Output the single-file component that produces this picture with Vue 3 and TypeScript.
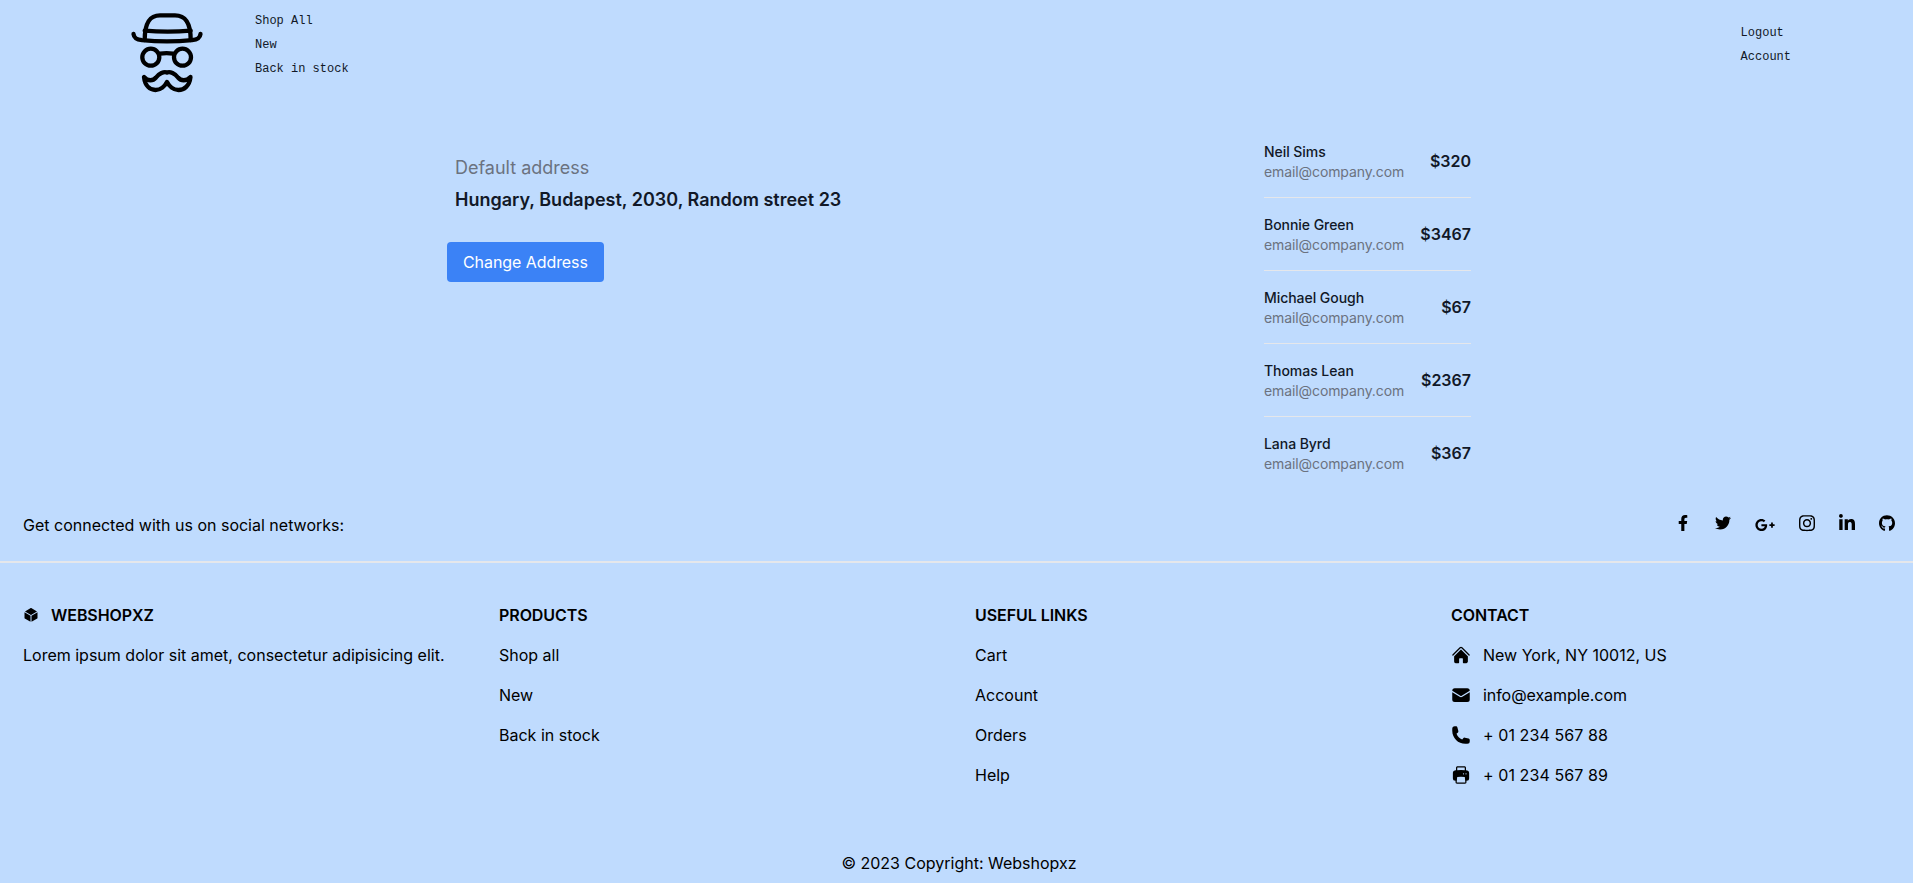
<template>
  <div class="page">
    <header class="topbar">
      <svg class="logo" viewBox="0 0 76 90" fill="none" stroke="#000" stroke-width="4.3" stroke-linecap="round" stroke-linejoin="round">
        <path d="M14.7 30 C14.7 12 20 5.4 30 5.4 L45 5.4 C55 5.4 60.7 12 60.7 30" />
        <path d="M14.7 20.6 Q37.7 22.6 60.7 20.6" />
        <path d="M3.5 24 C4 28.5 7 29.6 12 30.2 Q37 32.6 62 30.2 C67 29.6 70 28.5 70.5 24" />
        <circle cx="20.8" cy="47.2" r="8.5" />
        <circle cx="52.5" cy="47.2" r="8.5" />
        <path d="M30 43.6 Q36.6 42.8 43 43.6" />
        <path d="M14 67 C15 76 20 80 25.5 80 C30.5 80 35 76 37 72 C39 76 43.5 80 48.5 80 C54 80 59.5 76 60.5 67 C56 71.5 51 71 48 67.5 C45 63.5 40 61 37 62.5 C34 61 29 63.5 26 67.5 C23 71 18 71.5 14 67 Z" />
      </svg>
      <nav class="nav-main">
        <a v-for="item in mainNav" :key="item">{{ item }}</a>
      </nav>
      <nav class="nav-user">
        <a v-for="item in userNav" :key="item">{{ item }}</a>
      </nav>
    </header>

    <main class="content">
      <section class="address">
        <p class="address-label">Default address</p>
        <p class="address-value">Hungary, Budapest, 2030, Random street 23</p>
        <button class="change-btn">Change Address</button>
      </section>
      <ul class="customers">
        <li v-for="c in customers" :key="c.name" class="customer">
          <div>
            <p class="customer-name">{{ c.name }}</p>
            <p class="customer-email">email@company.com</p>
          </div>
          <span class="customer-price">{{ c.price }}</span>
        </li>
      </ul>
    </main>

    <footer class="footer">
      <div class="social">
        <span>Get connected with us on social networks:</span>
        <div class="social-icons">
          <a v-for="s in socials" :key="s.name" class="social-icon" :style="{ width: s.box + 'px', marginTop: s.top + 'px' }">
            <svg :viewBox="s.viewBox" :style="{ width: s.width + 'px' }" fill="currentColor"><path :d="s.d" /></svg>
          </a>
        </div>
      </div>

      <div class="columns">
        <div>
          <h6 class="col-title brand">
            <svg class="cube" viewBox="0 0 24 24" fill="currentColor">
              <path d="M12.378 1.602a.75.75 0 00-.756 0L3 6.632l9 5.25 9-5.25-8.622-5.03zM21.75 7.93l-9 5.25v9l8.628-5.032a.75.75 0 00.372-.648V7.93zM11.25 22.18v-9l-9-5.25v8.57a.75.75 0 00.372.648l8.628 5.032z" />
            </svg>
            WEBSHOPXZ
          </h6>
          <p class="col-row">Lorem ipsum dolor sit amet, consectetur adipisicing elit.</p>
        </div>
        <div>
          <h6 class="col-title">PRODUCTS</h6>
          <p v-for="l in products" :key="l" class="col-row">{{ l }}</p>
        </div>
        <div>
          <h6 class="col-title">USEFUL LINKS</h6>
          <p v-for="l in links" :key="l" class="col-row">{{ l }}</p>
        </div>
        <div>
          <h6 class="col-title">CONTACT</h6>
          <p v-for="c in contact" :key="c.text" class="col-row contact-row">
            <svg class="contact-icon" viewBox="0 0 24 24" fill="currentColor">
              <path v-for="d in c.paths" :key="d" fill-rule="evenodd" clip-rule="evenodd" :d="d" />
            </svg>
            <span :style="{ letterSpacing: c.spacing + 'px' }">{{ c.text }}</span>
          </p>
        </div>
      </div>

      <div class="copyright">© 2023 Copyright: Webshopxz</div>
    </footer>
  </div>
</template>

<script setup lang="ts">
const mainNav = ['Shop All', 'New', 'Back in stock']
const userNav = ['Logout', 'Account']

const customers = [
  { name: 'Neil Sims', price: '$320' },
  { name: 'Bonnie Green', price: '$3467' },
  { name: 'Michael Gough', price: '$67' },
  { name: 'Thomas Lean', price: '$2367' },
  { name: 'Lana Byrd', price: '$367' }
]

const products = ['Shop all', 'New', 'Back in stock']
const links = ['Cart', 'Account', 'Orders', 'Help']

const socials = [
  {
    name: 'facebook', box: 16, width: 10, top: 0, viewBox: '0 0 320 512',
    d: 'M279.14 288l14.22-92.66h-88.91v-60.13c0-25.35 12.42-50.06 52.24-50.06h40.42V6.26S260.43 0 225.36 0c-73.22 0-121.08 44.38-121.08 124.72v70.62H22.89V288h81.39v224h100.17V288z'
  },
  {
    name: 'twitter', box: 16, width: 16, top: 0, viewBox: '0 0 512 512',
    d: 'M459.37 151.716c.325 4.548.325 9.097.325 13.645 0 138.72-105.583 298.558-298.558 298.558-59.452 0-114.68-17.219-161.137-47.106 8.447.974 16.568 1.299 25.34 1.299 49.055 0 94.213-16.568 130.274-44.832-46.132-.975-84.792-31.188-98.112-72.772 6.498.974 12.995 1.624 19.818 1.624 9.421 0 18.843-1.3 27.614-3.573-48.081-9.747-84.143-51.98-84.143-102.985v-1.299c13.969 7.797 30.214 12.67 47.431 13.319-28.264-18.843-46.781-51.005-46.781-87.391 0-19.492 5.197-37.36 14.294-52.954 51.655 63.675 129.3 105.258 216.365 109.807-1.624-7.797-2.599-15.918-2.599-24.04 0-57.828 46.782-104.934 104.934-104.934 30.213 0 57.502 12.67 76.67 33.137 23.715-4.548 46.456-13.32 66.599-25.34-7.798 24.366-24.366 44.833-46.132 57.827 21.117-2.273 41.584-8.122 60.426-16.243-14.292 20.791-32.161 39.308-52.628 54.253z'
  },
  {
    name: 'google', box: 20, width: 20, top: 2, viewBox: '0 0 640 512',
    d: 'M386.061 228.496c1.834 9.692 3.143 19.384 3.143 31.956C389.204 370.205 315.599 448 204.8 448c-106.084 0-192-85.915-192-192s85.916-192 192-192c51.864 0 95.083 18.859 128.611 50.292l-52.126 50.03c-14.145-13.621-39.028-29.599-76.485-29.599-65.484 0-118.92 54.221-118.92 121.277 0 67.056 53.436 121.277 118.92 121.277 75.961 0 104.513-54.745 108.965-82.773H204.8v-66.009h181.261zm185.406 6.437V179.2h-56.001v55.733h-55.733v56.001h55.733v55.733h56.001v-55.733H627.2v-56.001h-55.733z'
  },
  {
    name: 'instagram', box: 16, width: 16, top: 0, viewBox: '0 0 448 512',
    d: 'M224.1 141c-63.6 0-114.9 51.3-114.9 114.9s51.3 114.9 114.9 114.9S339 319.5 339 255.9 287.7 141 224.1 141zm0 189.6c-41.1 0-74.7-33.5-74.7-74.7s33.5-74.7 74.7-74.7 74.7 33.5 74.7 74.7-33.6 74.7-74.7 74.7zm146.4-194.3c0 14.9-12 26.8-26.8 26.8-14.9 0-26.8-12-26.8-26.8s12-26.8 26.8-26.8 26.8 12 26.8 26.8zm76.1 27.2c-1.7-35.9-9.9-67.7-36.2-93.9-26.2-26.2-58-34.4-93.9-36.2-37-2.1-147.9-2.1-184.9 0-35.8 1.7-67.6 9.9-93.9 36.1s-34.4 58-36.2 93.9c-2.1 37-2.1 147.9 0 184.9 1.7 35.9 9.9 67.7 36.2 93.9s58 34.4 93.9 36.2c37 2.1 147.9 2.1 184.9 0 35.9-1.7 67.7-9.9 93.9-36.2 26.2-26.2 34.4-58 36.2-93.9 2.1-37 2.1-147.8 0-184.8zM398.8 388c-7.8 19.6-22.9 34.7-42.6 42.6-29.5 11.7-99.5 9-132.1 9s-102.7 2.6-132.1-9c-19.6-7.8-34.7-22.9-42.6-42.6-11.7-29.5-9-99.5-9-132.1s-2.6-102.7 9-132.1c7.8-19.6 22.9-34.7 42.6-42.6 29.5-11.7 99.5-9 132.1-9s102.7-2.6 132.1 9c19.6 7.8 34.7 22.9 42.6 42.6 11.7 29.5 9 99.5 9 132.1s2.7 102.7-9 132.1z'
  },
  {
    name: 'linkedin', box: 16, width: 16, top: 0, viewBox: '0 0 448 512',
    d: 'M100.28 448H7.4V148.9h92.88zM53.79 108.1C24.09 108.1 0 83.5 0 53.8a53.79 53.79 0 0 1 107.58 0c0 29.7-24.1 54.3-53.79 54.3zM447.9 448h-92.68V302.4c0-34.7-.7-79.2-48.29-79.2-48.29 0-55.69 37.7-55.69 76.7V448h-92.78V148.9h89.08v40.8h1.3c12.4-23.5 42.69-48.3 87.88-48.3 94 0 111.28 61.9 111.28 142.3V448z'
  },
  {
    name: 'github', box: 16, width: 16, top: 0, viewBox: '0 0 496 512',
    d: 'M165.9 397.4c0 2-2.3 3.6-5.2 3.6-3.3 0-5.6-1.6-5.6-3.6 0-2 2.3-3.6 5.2-3.6 3-.3 5.6 1.3 5.6 3.6zm-31.1-4.5c-.7 2 1.3 4.3 4.3 4.9 2.6 1 5.6 0 6.2-2s-1.3-4.3-4.3-5.2c-2.6-.7-5.5.3-6.2 2.3zm44.2-1.7c-2.9.7-4.9 2.6-4.6 4.9.3 2 2.9 3.3 5.9 2.6 2.9-.7 4.9-2.6 4.6-4.6-.3-1.9-3-3.2-5.9-2.9zM244.8 8C106.1 8 0 113.3 0 252c0 110.9 69.8 205.8 169.5 239.2 12.8 2.3 17.3-5.6 17.3-12.1 0-6.2-.3-40.4-.3-61.4 0 0-70 15-84.7-29.8 0 0-11.4-29.1-27.8-36.6 0 0-22.9-15.7 1.6-15.4 0 0 24.9 2 38.6 25.8 21.9 38.6 58.6 27.5 72.9 20.9 2.3-16 8.8-27.1 16-33.7-55.9-6.2-112.3-14.3-112.3-110.5 0-27.5 7.6-41.3 23.6-58.9-2.6-6.5-11.1-33.3 2.6-67.9 20.9-6.5 69 27 69 27 20-5.6 41.5-8.5 62.8-8.5s42.8 2.9 62.8 8.5c0 0 48.1-33.6 69-27 13.7 34.7 5.2 61.4 2.6 67.9 16 17.7 25.8 31.5 25.8 58.9 0 96.5-58.9 104.2-114.8 110.5 9.2 7.9 17 22.9 17 46.4 0 33.7-.3 75.4-.3 83.6 0 6.5 4.6 14.4 17.3 12.1C428.2 457.8 496 362.9 496 252 496 113.3 383.5 8 244.8 8z'
  }
]

const contact = [
  {
    text: 'New York, NY 10012, US', spacing: 0,
    paths: [
      'M11.47 3.84a.75.75 0 011.06 0l8.69 8.69a.75.75 0 101.06-1.06l-8.689-8.69a2.25 2.25 0 00-3.182 0l-8.69 8.69a.75.75 0 001.061 1.06l8.69-8.69z',
      'M12 5.432l8.159 8.159c.03.03.06.058.091.086v6.198c0 1.035-.84 1.875-1.875 1.875H15a.75.75 0 01-.75-.75v-4.5a.75.75 0 00-.75-.75h-3a.75.75 0 00-.75.75V21a.75.75 0 01-.75.75H5.625a1.875 1.875 0 01-1.875-1.875v-6.198a2.29 2.29 0 00.091-.086L12 5.43z'
    ]
  },
  {
    text: 'info@example.com', spacing: -0.06,
    paths: [
      'M1.5 8.67v8.58a3 3 0 003 3h15a3 3 0 003-3V8.67l-8.928 5.493a3 3 0 01-3.144 0L1.5 8.67z',
      'M22.5 6.908V6.75a3 3 0 00-3-3h-15a3 3 0 00-3 3v.158l9.714 5.978a1.5 1.5 0 001.572 0L22.5 6.908z'
    ]
  },
  {
    text: '+ 01 234 567 88', spacing: 0.08,
    paths: [
      'M1.5 4.5a3 3 0 013-3h1.372c.86 0 1.61.586 1.819 1.42l1.105 4.423a1.875 1.875 0 01-.694 1.955l-1.293.97c-.135.101-.164.249-.126.352a11.285 11.285 0 006.697 6.697c.103.038.25.009.352-.126l.97-1.293a1.875 1.875 0 011.955-.694l4.423 1.105c.834.209 1.42.959 1.42 1.82V19.5a3 3 0 01-3 3h-2.25C8.552 22.5 1.5 15.448 1.5 6.75V4.5z'
    ]
  },
  {
    text: '+ 01 234 567 89', spacing: 0.08,
    paths: [
      'M7.875 1.5C6.839 1.5 6 2.34 6 3.375v2.99c-.426.053-.851.11-1.274.174-1.454.218-2.476 1.483-2.476 2.917v6.294a3 3 0 003 3h.27l-.155 1.705A1.875 1.875 0 007.232 22.5h9.536a1.875 1.875 0 001.867-2.045l-.155-1.705h.27a3 3 0 003-3V9.456c0-1.434-1.022-2.7-2.476-2.917A48.716 48.716 0 0018 6.366V3.375c0-1.036-.84-1.875-1.875-1.875h-8.25zM16.5 6.205v-2.83A.375.375 0 0016.125 3h-8.25a.375.375 0 00-.375.375v2.83a49.353 49.353 0 019 0zm-.217 8.265c.178.018.317.16.333.337l.526 5.784a.375.375 0 01-.374.409H7.232a.375.375 0 01-.374-.409l.526-5.784a.373.373 0 01.333-.337 41.741 41.741 0 018.566 0zm.967-3.97a.75.75 0 01.75-.75h.008a.75.75 0 01.75.75v.008a.75.75 0 01-.75.75H18a.75.75 0 01-.75-.75V10.5zM15 9.75a.75.75 0 00-.75.75v.008c0 .414.336.75.75.75h.008a.75.75 0 00.75-.75V10.5a.75.75 0 00-.75-.75H15z'
    ]
  }
]
</script>

<style>
html, body {
  background: #bfdbfe;
}
</style>

<style scoped>
.page {
  background: #bfdbfe;
  font-family: Inter, "Liberation Sans", sans-serif;
  color: #000;
  height: 883px;
  overflow: hidden;
}

.topbar {
  display: flex;
  height: 100px;
  box-sizing: border-box;
  padding-left: 130px;
  font-family: "Liberation Mono", monospace;
  font-size: 12px;
  line-height: 24px;
  color: #111827;
}

.logo {
  width: 76px;
  height: 90px;
  margin-top: 10px;
}

.nav-main {
  display: flex;
  flex-direction: column;
  margin: 9px 0 0 49px;
}

.nav-user {
  display: flex;
  flex-direction: column;
  margin: 21px 0 0 auto;
  padding-right: 122px;
}

.content {
  display: flex;
  justify-content: space-between;
  padding: 25px 442px 0 447px;
  height: 365px;
}

.address {
  padding-top: 29px;
}

.address-label {
  margin: 0 0 4px 8px;
  font-size: 18px;
  line-height: 28px;
  color: #6b7280;
}

.address-value {
  margin: 0 0 28px 8px;
  font-size: 18px;
  line-height: 28px;
  font-weight: 600;
  color: #111827;
}

.change-btn {
  display: block;
  height: 40px;
  padding: 0 16px;
  border: none;
  border-radius: 4px;
  background: #3b82f6;
  color: #fff;
  font: inherit;
  font-size: 16px;
  letter-spacing: -0.07px;
}

.customers {
  list-style: none;
  margin: 0;
  padding: 0;
  width: 207px;
}

.customer {
  display: flex;
  justify-content: space-between;
  align-items: center;
  padding: 17px 0 15px;
  border-bottom: 1px solid #e5e7eb;
}

.customer:last-child {
  border-bottom: none;
}

.customer-name,
.customer-email {
  margin: 0;
  font-size: 14px;
  line-height: 20px;
}

.customer-name {
  font-weight: 500;
  letter-spacing: -0.05px;
  color: #111827;
}

.customer-email {
  letter-spacing: -0.1px;
  color: #6b7280;
}

.customer-price {
  margin-bottom: 2px;
  font-size: 16px;
  font-weight: 600;
  color: #111827;
}

.social {
  display: flex;
  justify-content: space-between;
  padding: 23px 18px 24px 23px;
  line-height: 24px;
  font-size: 16px;
  border-bottom: 2px solid #e5e7eb;
}

.social-icons {
  display: flex;
  align-items: flex-start;
  gap: 24px;
  height: 24px;
}

.social-icon {
  display: flex;
  justify-content: center;
  align-items: center;
  height: 20px;
}

.social-icon svg {
  display: block;
}

.columns {
  display: grid;
  grid-template-columns: repeat(4, 476px);
  padding: 40px 0 0 23px;
  height: 264px;
  box-sizing: border-box;
}

.col-title {
  display: flex;
  align-items: center;
  margin: 0 0 16px;
  font-size: 16px;
  line-height: 24px;
  font-weight: 600;
  letter-spacing: -0.06px;
}

.cube {
  width: 16px;
  height: 16px;
  margin-right: 12px;
}

.col-row {
  margin: 0 0 16px;
  font-size: 16px;
  line-height: 24px;
}

.contact-row {
  display: flex;
  align-items: center;
}

.contact-icon {
  display: block;
  width: 20px;
  height: 20px;
  margin-right: 12px;
}

.copyright {
  padding: 24px 0 0 5px;
  text-align: center;
  font-size: 16px;
  line-height: 24px;
}
</style>
